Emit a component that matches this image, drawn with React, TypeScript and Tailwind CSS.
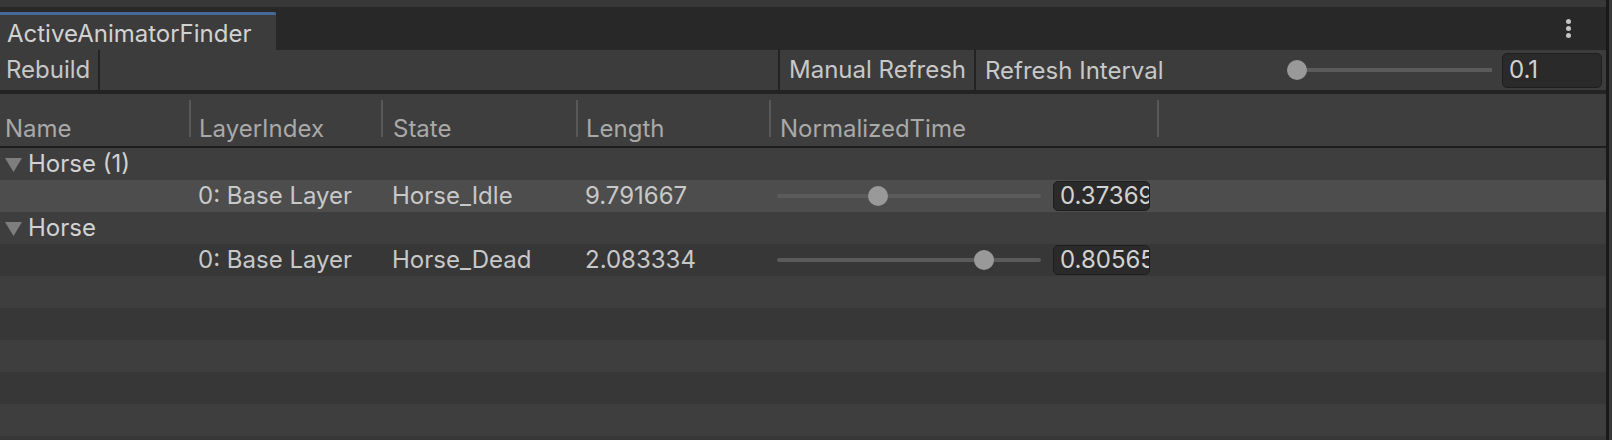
import React from 'react';

type AnimRow = {
  name: string;
  layer: string;
  state: string;
  length: string;
  time: number;
  timeText: string;
};

const groups: AnimRow[] = [
  { name: 'Horse (1)', layer: '0: Base Layer', state: 'Horse_Idle', length: '9.791667', time: 0.37369, timeText: '0.37369' },
  { name: 'Horse', layer: '0: Base Layer', state: 'Horse_Dead', length: '2.083334', time: 0.80565, timeText: '0.80565' },
];

const columns = [
  { label: 'Name', w: 'w-[189px]', pad: 'pl-[5px]' },
  { label: 'LayerIndex', w: 'w-[192px]', pad: 'pl-[8px]' },
  { label: 'State', w: 'w-[195px]', pad: 'pl-[10px]' },
  { label: 'Length', w: 'w-[193px]', pad: 'pl-[8px]' },
  { label: 'NormalizedTime', w: 'w-[388px]', pad: 'pl-[9px]' },
];

const RowSlider = ({ value }: { value: number }) => (
  <div className="relative h-[20px] w-[264px] flex items-center">
    <div className="h-[4px] w-full rounded-full bg-[#5b5b5b]" />
    <div
      className="absolute top-0 h-[20px] w-[20px] rounded-full bg-[#999999]"
      style={{ left: `${value * 244}px` }}
    />
  </div>
);

const Triangle = () => (
  <svg width="17" height="15" viewBox="0 0 17 15" className="shrink-0">
    <path d="M0 1 L17 1 L8.5 15 Z" fill="#7e7e7e" />
  </svg>
);

export default function App() {
  const filler = [0, 1, 2, 3, 4, 5];

  return (
    <div className="w-[1612px] h-[440px] overflow-hidden bg-[#383838] flex text-[#c8c8c8]" style={{ fontFamily: 'Inter, "Noto Sans", sans-serif' }}>
      <div className="w-[1606px] flex flex-col shrink-0 overflow-hidden">
        {/* window strip */}
        <div className="h-[7px] shrink-0 bg-[#383838]" />
        {/* tab bar */}
        <div className="h-[43px] shrink-0 bg-[#282828] flex items-end justify-between">
          <div className="w-[276px] h-[38px] flex flex-col bg-[#3c3c3c]">
            <div className="h-[3px] bg-[#44699a] rounded-tr-[2px]" />
            <div className="flex-1 flex items-center pl-[7px] text-[24px] text-[#d2d2d2] leading-none pt-[3px]">ActiveAnimatorFinder</div>
          </div>
          <div className="h-[43px] w-[20px] mr-[28px] flex flex-col items-center justify-center gap-[2px]">
            <div className="w-[5px] h-[5px] rounded-full bg-[#c4c4c4]" />
            <div className="w-[5px] h-[5px] rounded-full bg-[#c4c4c4]" />
            <div className="w-[5px] h-[5px] rounded-full bg-[#c4c4c4]" />
          </div>
        </div>
        {/* toolbar */}
        <div className="h-[40px] shrink-0 bg-[#3c3c3c] flex items-stretch text-[24px] leading-none text-[#c8c8c8]">
          <div className="w-[98px] flex items-center pl-[6px]">Rebuild</div>
          <div className="w-[2px] bg-[#232323]" />
          <div className="w-[678px]" />
          <div className="w-[2px] bg-[#232323]" />
          <div className="w-[194px] flex items-center pl-[9px]">Manual Refresh</div>
          <div className="w-[2px] bg-[#232323]" />
          <div className="flex-1 flex items-center pl-[9px]">
            <span className="w-[302px] pt-[2px] whitespace-nowrap">Refresh Interval</span>
            <div className="relative w-[205px] h-[20px] flex items-center">
              <div className="h-[4px] w-full bg-[#5b5b5b]" />
              <div className="absolute left-0 top-0 w-[20px] h-[20px] rounded-full bg-[#999999]" />
            </div>
            <div className="ml-[10px] w-[100px] h-[35px] rounded-[5px] bg-[#2a2a2a] border border-[#1e1e1e] flex items-center pl-[6px] text-[#d2d2d2]">0.1</div>
          </div>
        </div>
        <div className="h-[4px] shrink-0 bg-[#232323]" />
        {/* column header */}
        <div className="h-[52px] shrink-0 bg-[#3e3e3e] flex text-[24px] leading-none text-[#a9a9a9]">
          {columns.map((c, i) => (
            <div key={c.label} className={`${c.w} flex items-center`}>
              {i > 0 && <div className="w-[2px] h-[37px] mt-[-4px] bg-[#585858]" />}
              <span className={`${c.pad} pt-[17px] whitespace-nowrap`}>{c.label}</span>
            </div>
          ))}
          <div className="w-[2px] h-[37px] self-center mt-[-4px] bg-[#585858]" />
        </div>
        <div className="h-[2px] shrink-0 bg-[#1e1e1e]" />
        {/* rows */}
        <div className="flex flex-col text-[24px] leading-none">
          {groups.map((g, gi) => (
            <React.Fragment key={g.name}>
              <div className="h-[32px] shrink-0 bg-[#3e3e3e] flex items-center pl-[5px] gap-[6px] text-[#d2d2d2]">
                <Triangle />
                <span>{g.name}</span>
              </div>
              <div className={`h-[32px] shrink-0 flex items-center text-[#c8c8c8] ${gi === 0 ? 'bg-[#4d4d4d]' : 'bg-[#373737]'}`}>
                <div className="w-[189px]" />
                <div className="w-[192px] pl-[9px] whitespace-nowrap">{g.layer}</div>
                <div className="w-[195px] pl-[11px] whitespace-nowrap">{g.state}</div>
                <div className="w-[193px] pl-[9px]">{g.length}</div>
                <div className="w-[388px] pl-[8px] flex items-center gap-[12px]">
                  <RowSlider value={g.time} />
                  <div className="w-[97px] h-[30px] rounded-[5px] bg-[#2a2a2a] border border-[#1e1e1e] overflow-hidden flex items-center pl-[6px] text-[#d2d2d2] whitespace-nowrap">
                    {g.timeText}
                  </div>
                </div>
              </div>
            </React.Fragment>
          ))}
          {filler.map((f) => (
            <div key={f} className={`h-[32px] shrink-0 ${f % 2 === 0 ? 'bg-[#3e3e3e]' : 'bg-[#373737]'}`} />
          ))}
        </div>
      </div>
      {/* neighbouring window edge */}
      <div className="w-[3px] bg-[#191919] shrink-0" />
      <div className="w-[3px] bg-[#3a3a3a] shrink-0" />
    </div>
  );
}
